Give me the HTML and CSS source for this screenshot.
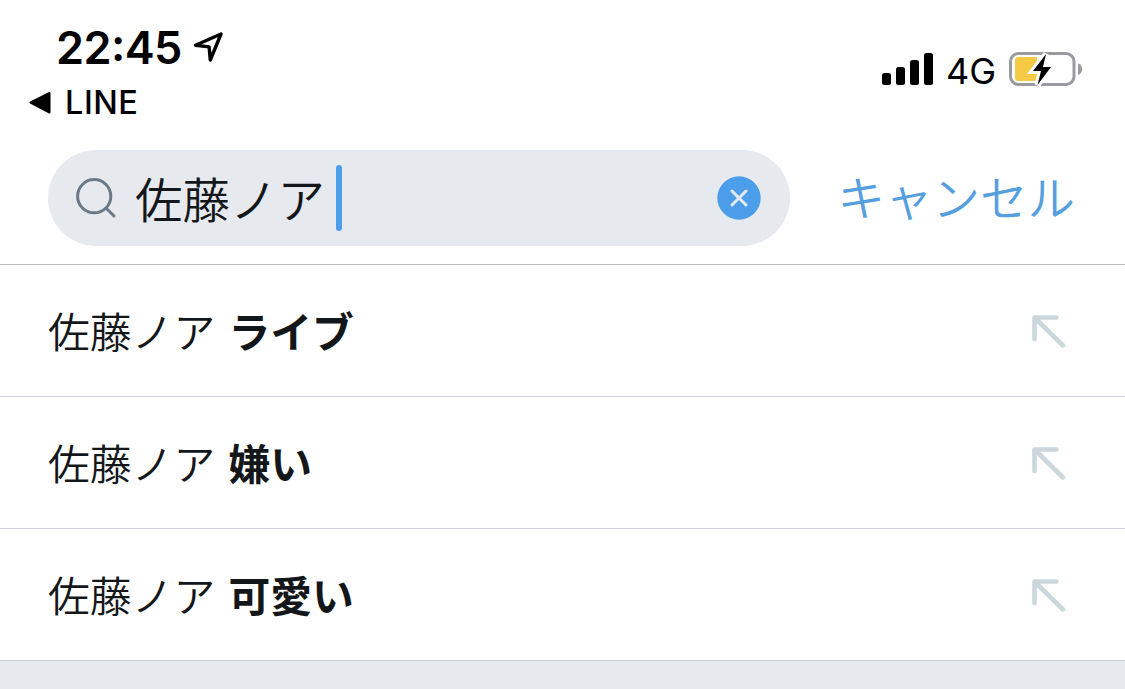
FILE: index.html
```html
<!DOCTYPE html>
<html lang="ja">
<head>
<meta charset="utf-8">
<title>検索</title>
<link rel="stylesheet" href="styles.css">
</head>
<body>
<header class="status">
  <div class="status-left">
    <div class="clock"><span class="time">22<span class="colon">:</span>45</span>
      <svg class="location" width="32" height="32" viewBox="0 0 32 32"><path d="M2.5 13.2 L28 2 L17.3 28 L16.1 14.9 Z" fill="none" stroke="#000" stroke-width="3.4" stroke-linejoin="round"/></svg>
    </div>
    <div class="back"><svg width="22" height="22" viewBox="0 0 22 22"><path d="M1.5 10.5 L20.5 1 V20.5 Z" stroke="#000" stroke-width="2" stroke-linejoin="round"/></svg><span class="back-label">LINE</span></div>
  </div>
  <div class="status-right">
    <svg class="signal" width="52" height="34" viewBox="0 0 52 34"><rect x="0" y="20" width="9" height="12" rx="2.5"/><rect x="14" y="14" width="9" height="18" rx="2.5"/><rect x="28" y="7" width="9" height="25" rx="2.5"/><rect x="42" y="0" width="9" height="32" rx="2.5"/></svg>
    <span class="network">4G</span>
    <svg class="battery" width="74" height="36" viewBox="0 0 74 36"><rect x="1.5" y="1.5" width="63.5" height="31" rx="8" fill="#fff" stroke="#9b9b9f" stroke-width="3"/><path d="M69 11.5 C74.5 13 74.5 21.5 69 23Z" fill="#9b9b9f"/><path d="M9 5 H28 V29 H9 Q6 29 6 26 V8 Q6 5 9 5Z" fill="#f7ca45"/><path d="M37 2 L24 19 H32 L28.5 33 L42 15 H34Z" fill="#fff" stroke="#fff" stroke-width="6"/><path d="M37 2 L24 19 H32 L28.5 33 L42 15 H34Z"/></svg>
  </div>
</header>
<section class="search">
  <div class="field">
    <svg class="glass" width="42" height="42" viewBox="0 0 42 42" fill="none" stroke="#6b7986" stroke-width="3" stroke-linecap="round"><circle cx="19.2" cy="19.2" r="16.6"/><path d="M31.2 31.2 L39 39"/></svg>
    <span class="query">佐藤ノア</span><span class="caret"></span>
    <svg class="clear" width="44" height="44" viewBox="0 0 44 44"><circle cx="22" cy="22" r="21.7" fill="#4c9eeb"/><path d="M15 15 L29 29 M29 15 L15 29" stroke="#e6e9ee" stroke-width="3" stroke-linecap="round"/></svg>
  </div>
  <span class="cancel">キャンセル</span>
</section>
<main class="list">
  <div class="row"><span class="term">佐藤ノア <b>ライブ</b></span><svg class="arrow" width="34" height="34" viewBox="0 0 34 34"><path d="M2.5 25 V3.5 H24.5 M3 4 L31 31.5"/></svg></div>
  <div class="row"><span class="term">佐藤ノア <b>嫌い</b></span><svg class="arrow" width="34" height="34" viewBox="0 0 34 34"><path d="M2.5 25 V3.5 H24.5 M3 4 L31 31.5"/></svg></div>
  <div class="row"><span class="term">佐藤ノア <b>可愛い</b></span><svg class="arrow" width="34" height="34" viewBox="0 0 34 34"><path d="M2.5 25 V3.5 H24.5 M3 4 L31 31.5"/></svg></div>
</main>
</body>
</html>
```

FILE: styles.css
```css
* { box-sizing: border-box; }
body { margin: 0; height: 689px; overflow: hidden; background: #e6e9ee; color: #14171a; font-family: "Noto Sans CJK JP", sans-serif; }
svg { display: block; flex: none; }
.status { height: 132px; padding: 20px 42px 0 29px; display: flex; justify-content: space-between; background: #fff; color: #000; font-family: Inter, sans-serif; }
.clock { display: flex; align-items: center; height: 56px; padding-left: 27px; }
.time { font-size: 45px; font-weight: 600; line-height: 56px; width: 137px; letter-spacing: -0.6px; }
.colon { line-height: 1; vertical-align: 3px; }
.back { display: flex; align-items: center; gap: 14px; height: 54px; }
.back-label { font-size: 32.5px; font-weight: 450; line-height: 52px; letter-spacing: 0.5px; }
.status-right { display: flex; align-items: center; height: 60px; margin-top: 20px; }
.network { flex: none; width: 74px; padding: 1px 0 0 12px; font-size: 36px; line-height: 60px; }
.battery { margin-left: 1px; }
.search { display: flex; align-items: center; height: 133px; padding: 18px 48px 19px; background: #fff; border-bottom: 1px solid #b9bbbd; }
.field { display: flex; flex: none; align-items: center; width: 742px; height: 96px; padding: 0 29px 0 27px; border-radius: 48px; background: #e6e9ee; }
.query { margin-left: 18px; width: 201px; font-size: 47.5px; font-weight: 350; line-height: 70px; white-space: nowrap; }
.caret { width: 6px; height: 66px; border-radius: 3px; background: #4c9eeb; }
.clear { margin-left: auto; }
.cancel { margin-left: 47.5px; padding-bottom: 4px; color: #559fdf; font-size: 47.5px; font-weight: 350; line-height: 70px; white-space: nowrap; }
.list { background: #fff; }
.row { display: flex; align-items: center; justify-content: space-between; height: 132px; padding: 0 59px 0 48px; border-bottom: 1px solid #ced2d8; }
.term { padding-bottom: 2px; font-size: 41.8px; font-weight: 350; line-height: 60px; white-space: nowrap; word-spacing: 4px; }
.term b { font-weight: 700; }
.arrow { fill: none; stroke: #ccd6dd; stroke-width: 4.6; stroke-linecap: round; stroke-linejoin: round; }
```
